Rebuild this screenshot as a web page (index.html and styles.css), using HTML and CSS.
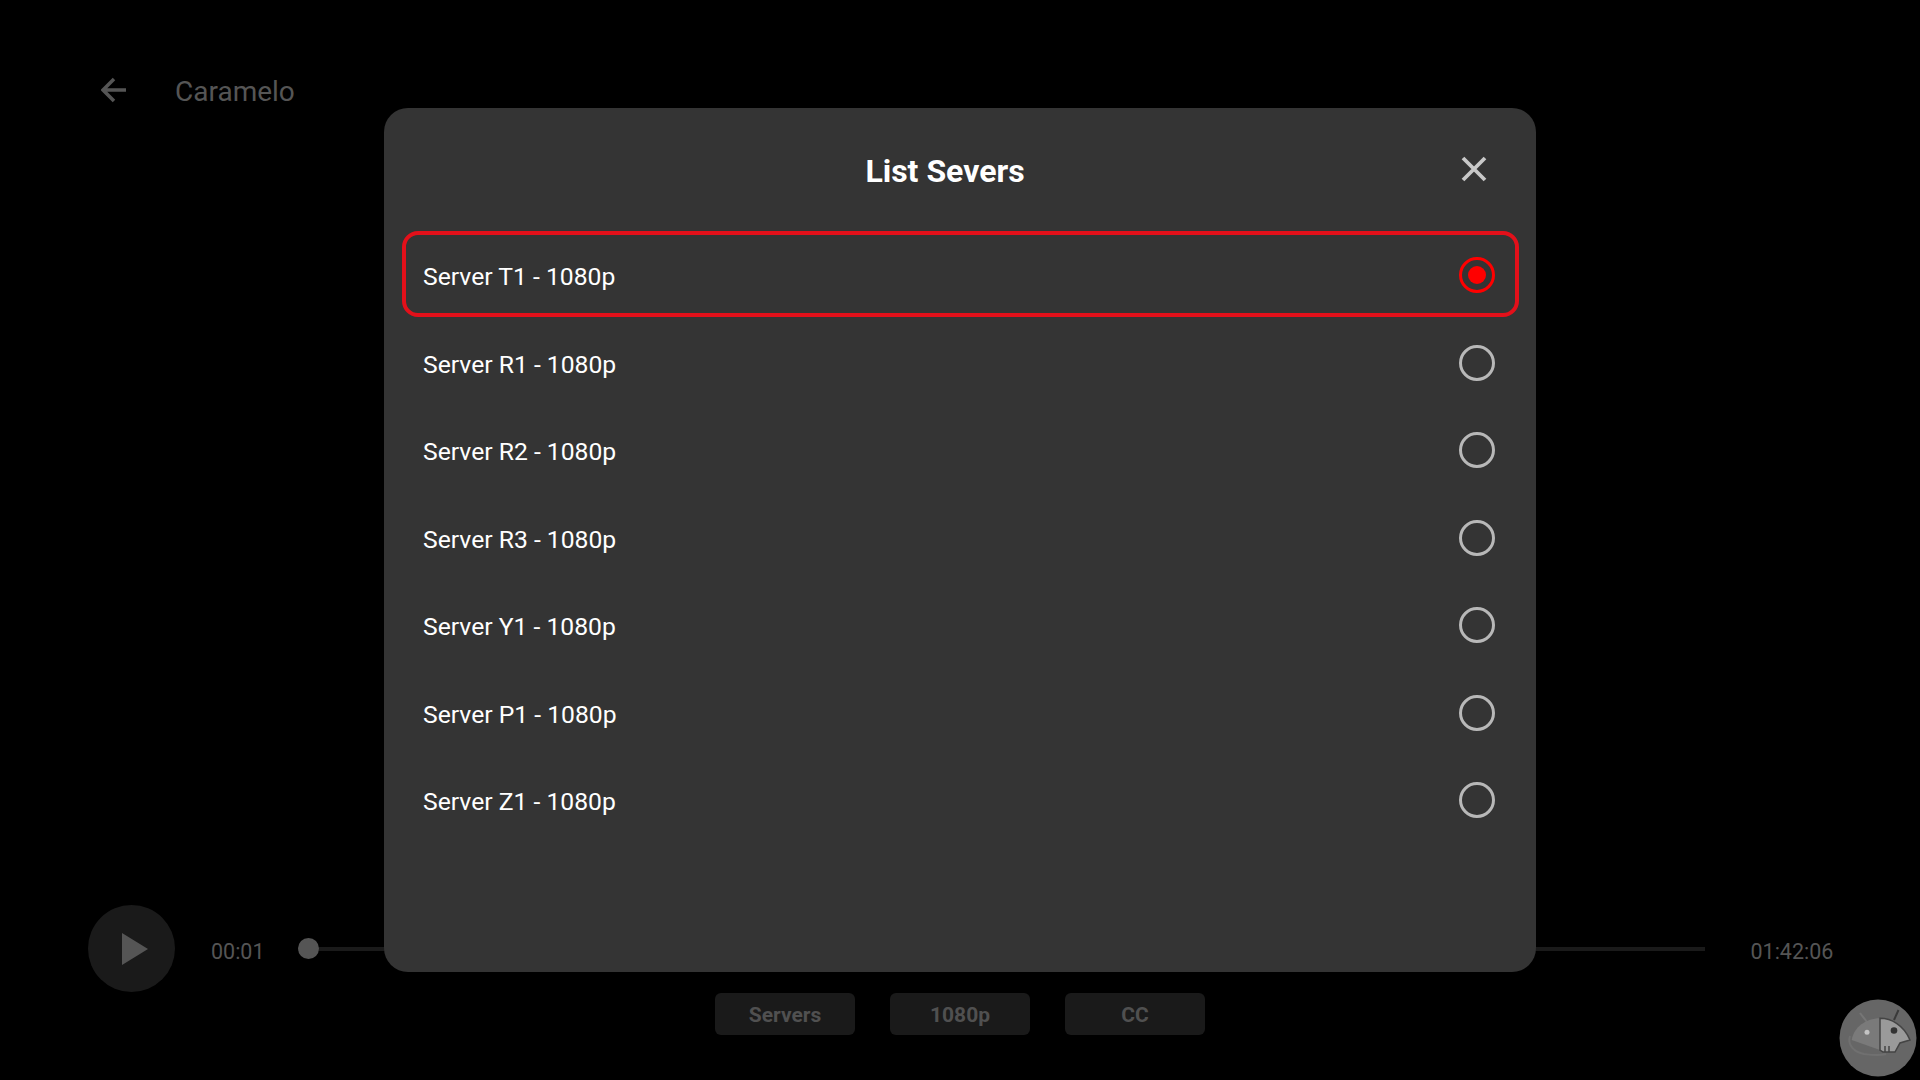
FILE: index.html
```html
<!DOCTYPE html>
<html lang="en">

<head>
    <meta charset="UTF-8">
    <title>Caramelo</title>
    <link rel="stylesheet" href="styles.css">
</head>

<body>
    <!-- Player behind the dialog -->
    <div class="player">
        <div class="top-bar">
            <svg class="back-icon" viewBox="0 0 26 26" width="26" height="26">
                <path d="M25 13H2M13 2L2 13l11 11" fill="none" stroke="#555" stroke-width="3.5"/>
            </svg>
            <span class="movie-title">Caramelo</span>
        </div>
        <div class="controls">
            <div class="play-button">
                <svg viewBox="0 0 26 32" width="26" height="32">
                    <path d="M0 0l26 16L0 32z" fill="#555"/>
                </svg>
            </div>
            <span class="time time-current">00:01</span>
            <div class="track">
                <div class="thumb"></div>
            </div>
            <span class="time time-total">01:42:06</span>
        </div>
        <div class="chips">
            <div class="chip">Servers</div>
            <div class="chip">1080p</div>
            <div class="chip">CC</div>
        </div>
    </div>

    <!-- Server dialog -->
    <div class="dialog">
        <div class="dialog-header">
            <h1 class="dialog-title">List Severs</h1>
            <svg class="close-icon" viewBox="0 0 26 26" width="26" height="26">
                <path d="M2 2l22 22M24 2L2 24" fill="none" stroke="#c8c8c8" stroke-width="3.8"/>
            </svg>
        </div>
        <div class="server-list">
            <div class="server-row selected"><span>Server T1 - 1080p</span><div class="radio"></div></div>
            <div class="server-row"><span>Server R1 - 1080p</span><div class="radio"></div></div>
            <div class="server-row"><span>Server R2 - 1080p</span><div class="radio"></div></div>
            <div class="server-row"><span>Server R3 - 1080p</span><div class="radio"></div></div>
            <div class="server-row"><span>Server Y1 - 1080p</span><div class="radio"></div></div>
            <div class="server-row"><span>Server P1 - 1080p</span><div class="radio"></div></div>
            <div class="server-row"><span>Server Z1 - 1080p</span><div class="radio"></div></div>
        </div>
    </div>

    <!-- Floating badge -->
    <svg class="badge" viewBox="0 0 78 78" width="78" height="78">
        <circle cx="39" cy="39" r="38.500" fill="#666"/>
        <path d="M11 37c-3 9 4 16 14 18 8 1 15 2 22 0" fill="none" stroke="#707070" stroke-width="2"/>
        <path d="M21 14l7 9" stroke="#767676" stroke-width="2"/>
        <path d="M59.500 11L55 21" stroke="#3a3a3a" stroke-width="2"/>
        <path d="M12.700 41C15 28 27 19.300 41 19.300V51z" fill="#7a7a7a"/>
        <path d="M41 19.300C52 19.300 65 26 71 41L61 44 56 53H44L41 51z" fill="#9a9a9a" stroke="#444" stroke-width="1.500"/>
        <path d="M46 47v6M50 47v6" stroke="#444" stroke-width="1.500"/>
        <circle cx="55" cy="31.500" r="3.300" fill="#333"/>
        <circle cx="28" cy="33.300" r="2.500" fill="#c4c4c4"/>
    </svg>
</body>

</html>
```

FILE: styles.css
```css
html,
body {
    margin: 0;
    height: 100%;
    background-color: #000;
    font-family: Roboto, sans-serif;
    overflow: hidden;
}

.player {
    height: 100vh;
    display: flex;
    flex-direction: column;
    box-sizing: border-box;
    padding: 72px 0 45px 0;
}

.top-bar {
    display: flex;
    align-items: center;
    height: 36px;
    padding-left: 101px;
}

.back-icon {
    margin-right: 48px;
}

.movie-title {
    color: #555;
    font-size: 28px;
    padding-top: 2px;
}

.controls {
    margin-top: auto;
    display: flex;
    align-items: center;
    padding-left: 88px;
}

.play-button {
    width: 87px;
    height: 87px;
    border-radius: 50%;
    background-color: #1a1a1a;
    display: flex;
    align-items: center;
    justify-content: center;
}

.play-button svg {
    margin-left: 7px;
}

.time {
    color: #555;
    font-size: 21.5px;
    padding-top: 5px;
}

.time-current {
    margin-left: 36px;
    width: 51px;
}

.time-total {
    margin-left: 45.5px;
}

.track {
    margin-left: 36px;
    width: 1407px;
    height: 4px;
    background-color: #1a1a1a;
    display: flex;
    align-items: center;
}

.thumb {
    width: 21px;
    height: 21px;
    border-radius: 50%;
    background-color: #555;
}

.chips {
    display: flex;
    justify-content: center;
    gap: 35px;
    margin-top: 1px;
}

.chip {
    width: 140px;
    height: 42px;
    box-sizing: border-box;
    padding-top: 1px;
    border-radius: 6px;
    background-color: #1a1a1a;
    color: #505050;
    font-size: 21px;
    font-weight: 700;
    display: flex;
    align-items: center;
    justify-content: center;
}

.dialog {
    position: absolute;
    top: 108px;
    left: 384px;
    width: 1152px;
    height: 864px;
    border-radius: 24px;
    background-color: #343434;
    box-sizing: border-box;
    padding: 0 17px 0 18px;
}

.dialog-header {
    position: relative;
    display: flex;
    justify-content: center;
    height: 123px;
}

.dialog-title {
    margin: 43px 31px 0 0;
    color: #fff;
    font-size: 32px;
    font-weight: 700;
    line-height: 40px;
}

.close-icon {
    position: absolute;
    top: 48px;
    right: 32px;
}

.server-list {
    display: flex;
    flex-direction: column;
}

.server-row {
    height: 87.5px;
    box-sizing: border-box;
    display: flex;
    align-items: center;
    justify-content: space-between;
    padding: 0 20px 0 17px;
    border: 4px solid transparent;
    border-radius: 16px;
    color: #fff;
    font-size: 24.7px;
}

.server-row span {
    padding-top: 4px;
}

.radio {
    width: 36px;
    height: 36px;
    margin-top: 1px;
    box-sizing: border-box;
    border: 3.5px solid #b8b8b8;
    border-radius: 50%;
    display: flex;
    align-items: center;
    justify-content: center;
}

.selected {
    height: 86px;
    margin-bottom: 1.5px;
    border-color: #e3101a;
}

.selected .radio {
    border-color: #f00;
}

.selected .radio::after {
    content: "";
    width: 18px;
    height: 18px;
    border-radius: 50%;
    background-color: #f00;
}

.badge {
    position: absolute;
    top: 999px;
    left: 1839px;
}
```
